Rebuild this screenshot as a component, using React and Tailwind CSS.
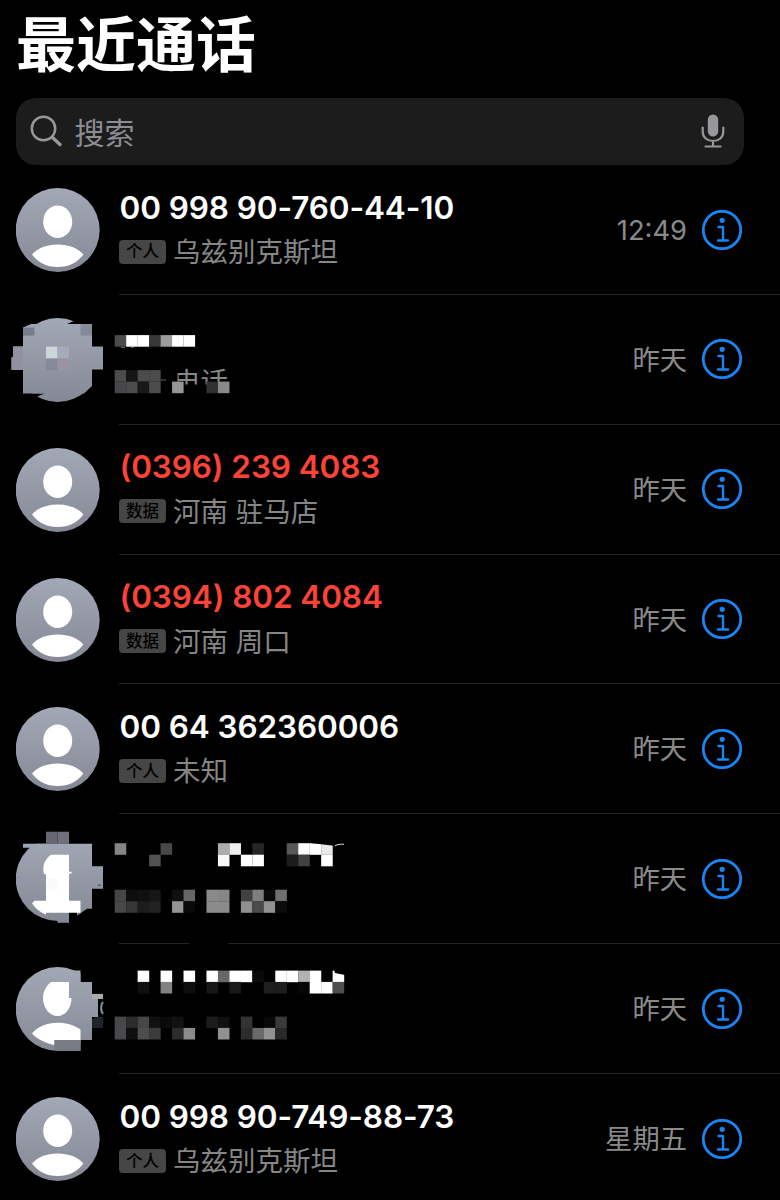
const calls = [
  { number: '00 998 90-760-44-10', tag: '个人', place: '乌兹别克斯坦', time: '12:49' },
  { place: '电话', time: '昨天', mask: 'a' },
  { number: '(0396) 239 4083', tag: '数据', place: '河南 驻马店', time: '昨天', missed: true },
  { number: '(0394) 802 4084', tag: '数据', place: '河南 周口', time: '昨天', missed: true },
  { number: '00 64 362360006', tag: '个人', place: '未知', time: '昨天' },
  { time: '昨天', mask: 'b' },
  { time: '昨天', mask: 'c' },
  { number: '00 998 90-749-88-73', tag: '个人', place: '乌兹别克斯坦', time: '星期五' },
]

const CELL = 11.47

// each strip: [y, first column, fills...], null leaves a cell empty
const masks = {
  a: {
    top: 294.9,
    strips: [
      [335, 10, '#4c4c4c', '#fff', '#fff', '#383838', '#9c9c9c', '#fff', '#fff'],
      [370, 10, '#4b4b4b', '#151515', '#4b4b4b', '#4b4b4b'],
      [381.5, 10, '#474749', '#4b4b4b', '#181818', '#4b4b4b', null, '#969696', null, null, '#303030', '#8a8a8a'],
    ],
  },
  b: {
    top: 814.3,
    strips: [
      [843.5, 10, '#858585', null, null, null, '#484848', null, null, null, null, '#adadad', '#eee', null, '#262626', null, null, '#585858', '#fff', '#fff', '#e9e9e9'],
      [855, 10, null, null, null, '#525252', null, null, null, null, null, '#f8f8f8', null, '#fff', '#fff', null, null, '#1c1c1c', '#414141', null, '#fff'],
      [890, 10, '#464646', '#0e0e0e', '#101010', '#161616', null, '#0f0f0f', '#666', null, '#8a8a8a', '#868686', null, '#414141', '#7e7e7e', '#0b0b0b', '#707070'],
      [901.5, 10, '#484848', '#363636', '#1c1c1c', '#222', null, '#959595', '#090909', null, '#8b8b8b', '#8b8b8b', null, '#909090', '#4a4a4a', '#929292', '#0c0c0c'],
    ],
  },
  c: {
    top: 944.1,
    strips: [
      [970.7, 10, null, null, '#fff', null, '#fff', null, '#fff', null, '#fff', '#686868', '#fff', '#fff', '#0a0a0a', null, '#fff', '#fff', '#b2b2b2', '#fff', null, '#fff'],
      [982, 10, null, null, '#101010', null, '#828282', null, '#0e0e0e', null, '#171717', null, '#191919', null, null, '#1e1e1e', '#1e1e1e', null, '#060606', '#fff', '#fff', '#4e4e4e'],
      [1016.7, 10, '#48484a', '#2c2c2c', '#464646', '#111', '#0b0b0b', '#121212', null, null, '#1c1c1c', '#101010', null, '#333', null, '#080808', '#3a3a3a'],
      [1028, 10, '#49494d', '#0f0f0f', '#4d4d4d', '#3c3c3c', null, '#2c2c2c', '#8b8b8b', null, null, '#919191', null, '#2c2c2c', '#6a6a6a', '#929292', '#292929'],
    ],
  },
}

function Mosaic({ id }) {
  const { top, strips } = masks[id]
  return (
    <svg className="absolute left-0 top-0 w-[360px] h-[130px]" viewBox={`0 ${top} 360 130`}>
      <defs>
        <linearGradient id={`tone-${id}`} gradientUnits="userSpaceOnUse" x1="0" y1={top + 23} x2="0" y2={top + 107}>
          <stop offset="0" stopColor="#a3a8b6" />
          <stop offset="1" stopColor="#858995" />
        </linearGradient>
      </defs>
      {id === 'a' && (
        <>
          <path d="M12 316h11v88H12zM92 316h11v88H92zM23 393.300h22l-8 3.200 5 6H20z" fill="#000" />
          <path d="M74 321l18-5v8H67z" fill="#000" />
          <path d="M23 327.500c4-1.500 7-3.500 9-3.500h60v62l-8 7.300H23z" fill="url(#tone-a)" />
          <path d="M13 346.500h90v23H11.500v-12.500H13z" fill="url(#tone-a)" />
          <path d="M23 327.500h11.500v8H23z" fill="#777d89" />
          <path d="M80.500 324H92v11.500H80.500z" fill="#858b99" />
          <path d="M13 346.500h10V370H11.500v-12.500H13z" fill="#92919f" />
          <path d="M46 346.500h11.500v12H46z" fill="#ccd5d8" />
          <path d="M57.500 346.500H69v12H57.500z" fill="#a4abba" />
          <path d="M46 358.500h11.500V370H46z" fill="#848a97" />
          <path d="M57.500 358.500H69V370H57.500z" fill="#9a93a1" />
          <path d="M169 366h4v26h-4zM173 373h4.500v20H173zM172 384.500h60V396h-60z" fill="#000" />
          <path d="M161 379.500h5v1h-5zM121 347h4v1h-4zM131 347h3v1h-3z" fill="#666" />
        </>
      )}
      {id === 'b' && (
        <>
          <path d="M23 832h81v12H23zM69 832h35v92H69z" fill="#000" />
          <path d="M57.500 832H69v12H57.500z" fill="#6e717c" />
          <path d="M46 832h11.500v12H46z" fill="#656873" />
          <path d="M23 844h69v22.500h11V889H92v20h-5l-10 7v-7h-8v14H57.500v-50H30v-25h-7z" fill="url(#tone-b)" />
          <path d="M46 874.500h-2c-2-8 0-14 7-19.500h18v46h11.500v12H46v2c-6-2.500-11-6.500-14-11.500l2.500-2.500H46z" fill="#fff" />
          <path d="M69 872h2.500v2H69z" fill="#fff" />
          <path d="M46 879h11.500v11H46z" fill="#fafafd" />
          <path d="M98 885h3v1h-3z" fill="#444" />
        </>
      )}
      {id === 'c' && (
        <>
          <path d="M80.500 965h24v88h-24z" fill="#000" />
          <path d="M72 970.500h8.500V982h11.500v12h11v5h-5v18h-6v23H80.500v11H68z" fill="url(#tone-c)" />
          <path d="M51 982h18v16h2.500c0 10-6 18-14 18s-14.500-8-14.500-18c0-6 3-12 8-16z" fill="#fff" />
          <path d="M57.500 1022.800c9 0 17 2.700 23 6.700v10.500H54.500v5c-9-2-18-6-22.500-11.500 6-7 15-10.700 25.500-10.700z" fill="#fff" />
          <path d="M54.500 1040h26v11H67c-5 .500-9-.500-12.500-1z" fill="#777b83" />
          <path d="M92 1020c1-2 3-3 6-3h5v11H92z" fill="#21232a" />
          <path d="M92 994h11v5H92z" fill="#aaa9ae" />
          <path d="M103 1002c-2.500 3-2.500 9 0 12" fill="none" stroke="#8a909c" strokeWidth="2" />
        </>
      )}
      {strips.map(([y, col, ...fills]) =>
        fills.map((fill, i) => fill && (
          <rect key={`${y}-${i}`} x={(col + i) * CELL} y={y} width={CELL + 0.1} height={11.6} fill={fill} />
        ))
      )}
      {id === 'b' && (
        <>
          <path d="M308 843h26v3z" fill="#000" />
          <path d="M335 846c3-1.500 5-1.500 9-1.500" fill="none" stroke="#ddd" />
        </>
      )}
      {id === 'c' && <path d="M334 970h11v5l-10-2z" fill="#000" />}
    </svg>
  )
}

function Avatar({ blank }) {
  return (
    <svg className="w-[84px] h-[84px] shrink-0" viewBox="0 0 84 84">
      <defs>
        <linearGradient id="avatar" x1="0" y1="0" x2="0" y2="1">
          <stop offset="0" stopColor="#a3a8b6" />
          <stop offset="1" stopColor="#858995" />
        </linearGradient>
      </defs>
      <circle cx="41.700" cy="42" r="42" fill="url(#avatar)" />
      {!blank && (
        <g fill="#fff">
          <ellipse cx="41.700" cy="33.700" rx="14.500" ry="16.200" />
          <path d="M16 66.500C21.700 60 30.700 56.500 41.700 56.500s20 3.500 25.700 10C61.700 74.500 52.700 79 41.700 79S21.700 74.500 16 66.500z" />
        </g>
      )}
    </svg>
  )
}

function InfoIcon() {
  return (
    <svg className="w-10 h-10 shrink-0" viewBox="0 0 40 40" fill="none" stroke="#1b84f2">
      <circle cx="20" cy="20" r="18.700" strokeWidth="2.800" />
      <circle cx="20.200" cy="10.300" r="2.600" fill="#1b84f2" stroke="none" />
      <path d="M16.500 17H21v13.500M16 30.500h10" strokeWidth="2.400" strokeLinecap="round" strokeLinejoin="round" />
    </svg>
  )
}

function CallRow({ call, last }) {
  const { number, tag, place, time, missed, mask } = call
  return (
    <div className="relative flex h-[129.85px] shrink-0 items-center pl-[15.5px]">
      <Avatar blank={Boolean(mask)} />
      <div className={`ml-[19.5px] flex h-full flex-1 items-center ${last ? '' : 'border-b border-[#232323]'}`}>
        <div className="flex-1 pt-px">
          <div className={`h-[43px] whitespace-nowrap pt-px pl-[0.5px] text-[31.5px] leading-[40px] font-[580] tracking-[-0.1px] ${missed ? 'text-[#fb4338]' : 'text-white'}`}>
            {number}
          </div>
          <div className="flex h-[44px] items-center">
            {tag && (
              <span className="mr-[7px] flex h-6 w-[47px] items-center justify-center rounded-[4px] bg-[#464646] text-[16.5px] leading-none font-medium text-black">
                {tag}
              </span>
            )}
            <span className={`pt-px text-[27.5px] leading-[40px] text-[#868686] ${tag ? '' : 'ml-[54px]'}`}>{place}</span>
          </div>
        </div>
        <span className="mr-[15px] pt-[4px] text-[27.3px] text-[#8a8a8a]">{time}</span>
        <div className="mr-[38px]">
          <InfoIcon />
        </div>
      </div>
      {mask && <Mosaic id={mask} />}
      {mask === 'b' && <div className="absolute bottom-0 left-[189px] h-[2px] w-[39px] bg-black" />}
    </div>
  )
}

export default function App() {
  return (
    <div className="flex h-[1200px] w-[780px] flex-col overflow-hidden bg-black font-['Inter','Noto_Sans_CJK_SC',sans-serif]">
      <h1 className="h-[97.5px] shrink-0 pl-4 text-[60px] leading-[91px] font-bold text-white">最近通话</h1>

      <div className="mb-[0.6px] ml-[15.5px] flex h-[67px] w-[728px] shrink-0 items-center rounded-[20px] bg-[#1c1c1d] text-[#97979c]">
        <svg className="ml-[14px] h-8 w-8" viewBox="0 0 32 32" fill="none" stroke="currentColor" strokeLinecap="round">
          <circle cx="13.500" cy="13.500" r="11.700" strokeWidth="2.500" />
          <path d="M22.500 22.500l7.500 7" strokeWidth="3.300" />
        </svg>
        <span className="ml-[13px] flex-1 pt-[3px] text-[30px] leading-[44px] text-[#8d8d92]">搜索</span>
        <svg className="mr-[19px] h-9 w-6" viewBox="0 0 24 36" fill="none" stroke="currentColor" strokeLinecap="round">
          <rect x="6.800" y="1.500" width="10.400" height="22" rx="5.200" fill="currentColor" stroke="none" />
          <path d="M1.700 14.500v4c0 6 4.500 9.500 10.300 9.500s10.300-3.500 10.300-9.500v-4M12 28v5.500M4.500 33.500h15" strokeWidth="2.200" />
        </svg>
      </div>

      {calls.map((call, i) => (
        <CallRow key={i} call={call} last={i === calls.length - 1} />
      ))}
    </div>
  )
}
